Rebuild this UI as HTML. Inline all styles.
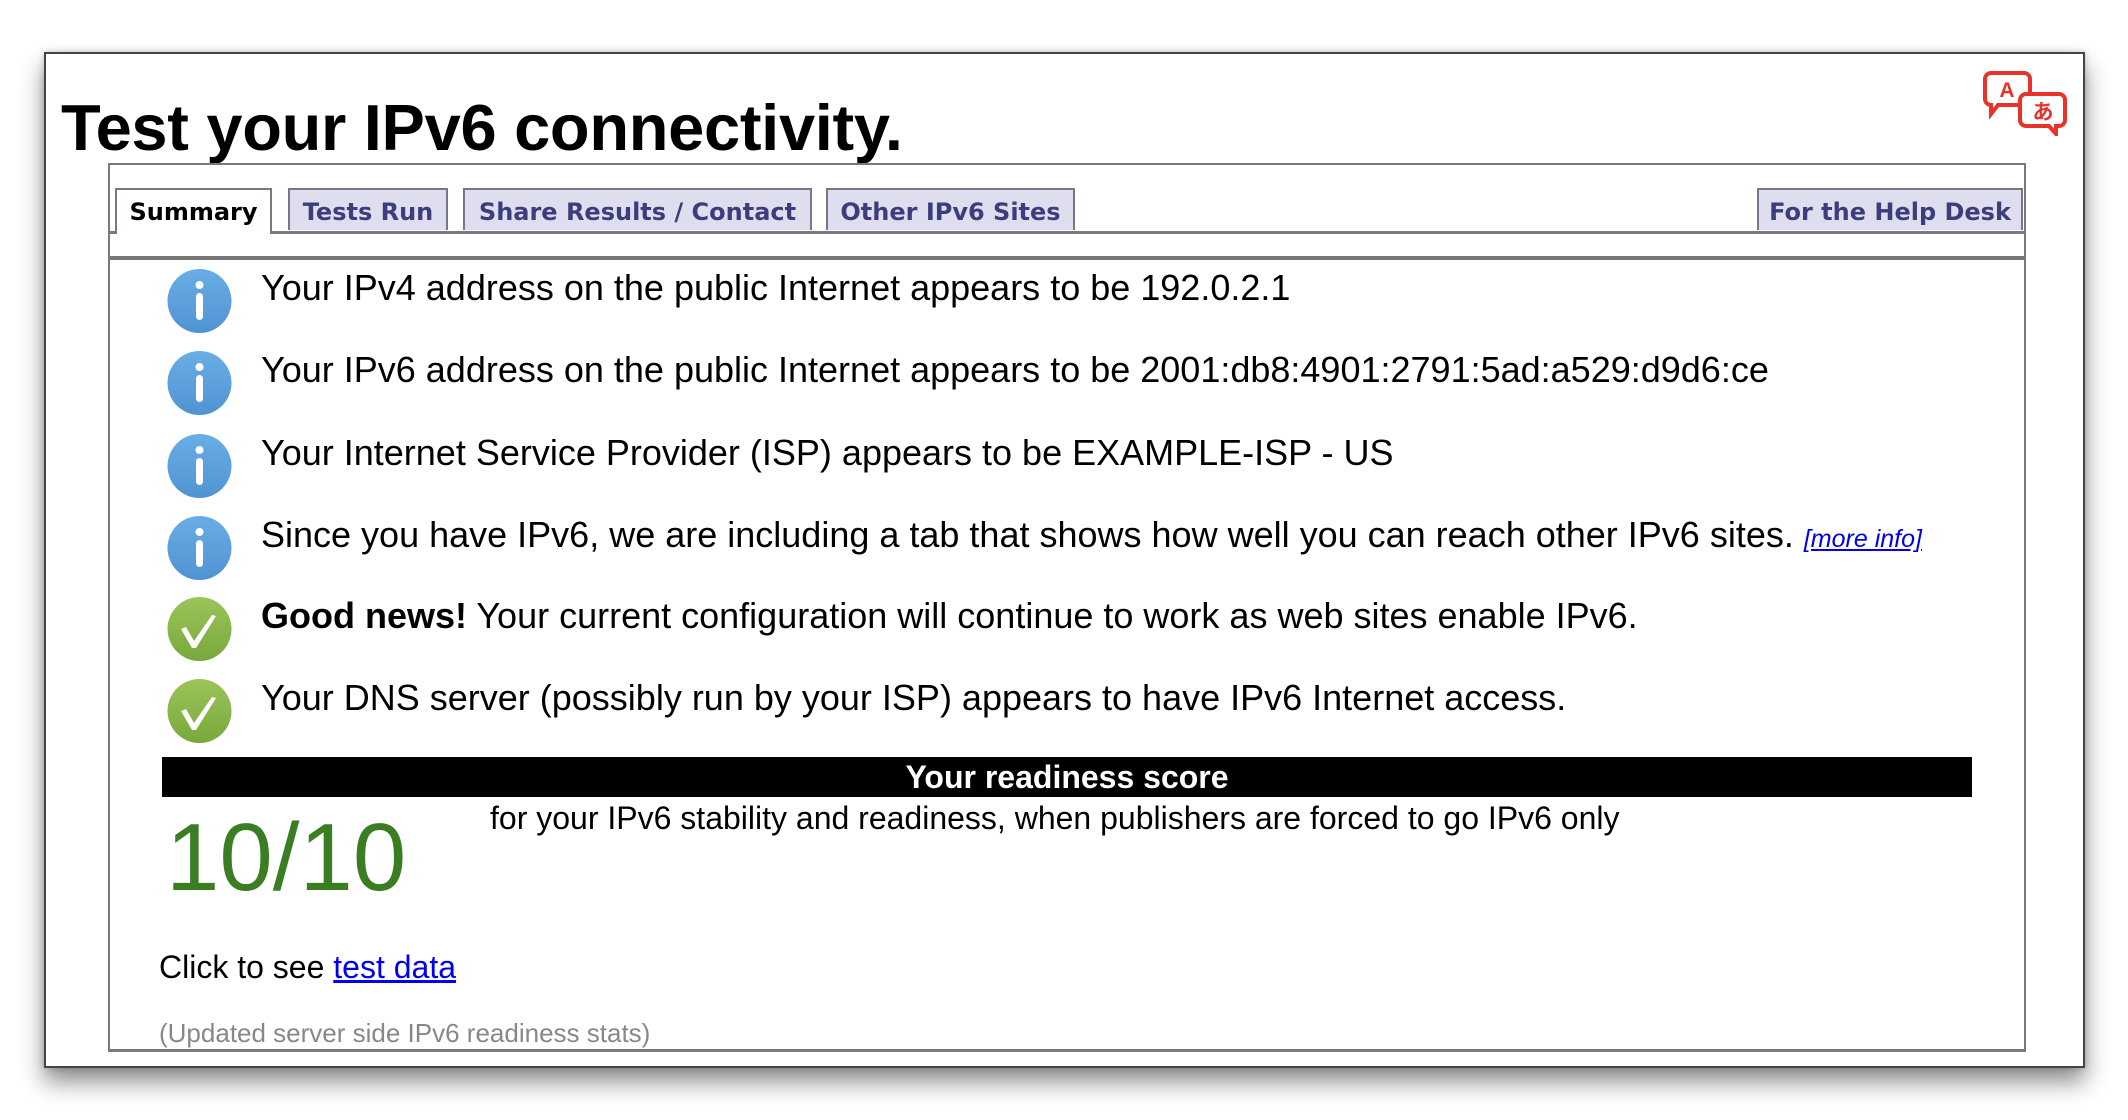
<!DOCTYPE html>
<html><head><meta charset="utf-8">
<style>
body{margin:0;width:2128px;height:1120px;background:#fff;position:relative;overflow:hidden;font-family:"Liberation Sans",Arial,sans-serif;}
.win{position:absolute;left:44px;top:52px;width:2037px;height:1012px;border:2px solid #444;background:#fff;box-shadow:0 14px 22px rgba(0,0,0,.45),0 0 6px rgba(0,0,0,.2);}
.abs{position:absolute;white-space:nowrap;}
h1{position:absolute;left:61px;top:88px;margin:0;font-size:65px;font-weight:bold;letter-spacing:-0.3px;line-height:80px;}
.box{position:absolute;left:108px;top:163px;width:1914px;height:884px;border:2px solid #7a7a7a;border-bottom:3px solid #7a7a7a;}
.tabline{position:absolute;left:110px;top:231px;width:1914px;height:3px;background:#7a7a80;}
.line2{position:absolute;left:110px;top:256px;width:1914px;height:4px;background:#777;}
.tab{position:absolute;top:188px;height:42px;background:#dfdeee;border:2px solid #777788;border-bottom:none;font-family:"DejaVu Sans",Verdana,sans-serif;font-weight:bold;font-size:24px;color:#3b3d7c;line-height:44px;text-align:center;box-sizing:border-box;}
.tab.sel{background:#fff;color:#000;height:46px;}
.row{position:absolute;left:261px;font-size:36px;line-height:40px;color:#000;white-space:nowrap;}
.ic{position:absolute;left:166px;width:67px;height:67px;}
</style></head><body>
<div class="win"></div>
<h1>Test your IPv6 connectivity.</h1>
<svg class="abs" style="left:1982px;top:70px" width="86" height="66" viewBox="0 0 86 66">
<path d="M8 3 h34 a6 6 0 0 1 6 6 v20 a6 6 0 0 1 -6 6 h-26 l-7 9 v-9 a6 6 0 0 1 -6 -6 v-20 a6 6 0 0 1 6 -6z" fill="#fff" stroke="#e8332a" stroke-width="4"/>
<text x="25" y="27" font-family="Liberation Sans,sans-serif" font-weight="bold" font-size="21" fill="#e8332a" text-anchor="middle">A</text>
<path d="M44 24 h33 a6 6 0 0 1 6 6 v20 a6 6 0 0 1 -6 6 h-3 v8 l-7 -8 h-23 a6 6 0 0 1 -6 -6 v-20 a6 6 0 0 1 6 -6z" fill="#fff" stroke="#e8332a" stroke-width="4"/>
<text x="61" y="49" font-family="Noto Sans CJK JP,sans-serif" font-weight="bold" font-size="21" fill="#e8332a" text-anchor="middle">あ</text>
</svg>
<div class="box"></div>
<div class="tabline"></div>
<div class="line2"></div>
<div class="tab sel" style="left:115px;width:157px;">Summary</div>
<div class="tab" style="left:288px;width:160px;">Tests Run</div>
<div class="tab" style="left:463px;width:349px;">Share Results / Contact</div>
<div class="tab" style="left:826px;width:249px;">Other IPv6 Sites</div>
<div class="tab" style="left:1757px;width:266px;">For the Help Desk</div>

<svg width="0" height="0" style="position:absolute"><defs>
<linearGradient id="bl" x1="0" y1="0" x2="0" y2="1"><stop offset="0" stop-color="#6aaee6"/><stop offset="1" stop-color="#4f93d2"/></linearGradient>
<linearGradient id="gr" x1="0" y1="0" x2="0" y2="1"><stop offset="0" stop-color="#9cc45a"/><stop offset="1" stop-color="#78a83c"/></linearGradient>
</defs></svg>

<svg class="ic" style="top:268px" viewBox="0 0 67 67"><circle cx="33.5" cy="33" r="32" fill="url(#bl)"/><circle cx="33.5" cy="17" r="4" fill="#fff"/><rect x="30" y="25" width="7" height="27" rx="3.5" fill="#fff"/></svg>
<svg class="ic" style="top:350px" viewBox="0 0 67 67"><circle cx="33.5" cy="33" r="32" fill="url(#bl)"/><circle cx="33.5" cy="17" r="4" fill="#fff"/><rect x="30" y="25" width="7" height="27" rx="3.5" fill="#fff"/></svg>
<svg class="ic" style="top:433px" viewBox="0 0 67 67"><circle cx="33.5" cy="33" r="32" fill="url(#bl)"/><circle cx="33.5" cy="17" r="4" fill="#fff"/><rect x="30" y="25" width="7" height="27" rx="3.5" fill="#fff"/></svg>
<svg class="ic" style="top:515px" viewBox="0 0 67 67"><circle cx="33.5" cy="33" r="32" fill="url(#bl)"/><circle cx="33.5" cy="17" r="4" fill="#fff"/><rect x="30" y="25" width="7" height="27" rx="3.5" fill="#fff"/></svg>
<svg class="ic" style="top:596px" viewBox="0 0 67 67"><circle cx="33.5" cy="33" r="32" fill="url(#gr)"/><path d="M15 33 L26 52 L30 52 L50 20 L46 19 L28 45 L20 31Z" fill="#fff"/></svg>
<svg class="ic" style="top:678px" viewBox="0 0 67 67"><circle cx="33.5" cy="33" r="32" fill="url(#gr)"/><path d="M15 33 L26 52 L30 52 L50 20 L46 19 L28 45 L20 31Z" fill="#fff"/></svg>

<div class="row" style="top:268px">Your IPv4 address on the public Internet appears to be 192.0.2.1</div>
<div class="row" style="top:350px">Your IPv6 address on the public Internet appears to be 2001:db8:4901:2791:5ad:a529:d9d6:ce</div>
<div class="row" style="top:433px">Your Internet Service Provider (ISP) appears to be EXAMPLE-ISP - US</div>
<div class="row" style="top:515px">Since you have IPv6, we are including a tab that shows how well you can reach other IPv6 sites. <a style="color:#00e;font-style:italic;font-size:25px;text-decoration:underline">[more info]</a></div>
<div class="row" style="top:596px"><b>Good news!</b> Your current configuration will continue to work as web sites enable IPv6.</div>
<div class="row" style="top:678px">Your DNS server (possibly run by your ISP) appears to have IPv6 Internet access.</div>

<div class="abs" style="left:162px;top:757px;width:1810px;height:40px;background:#000;color:#fff;font-weight:bold;font-size:32px;line-height:40px;text-align:center;">Your readiness score</div>
<div class="abs" style="left:166px;top:808px;font-size:96px;line-height:100px;color:#3a7d22;">10/10</div>
<div class="abs" style="left:490px;top:800px;font-size:32px;line-height:36px;">for your IPv6 stability and readiness, when publishers are forced to go IPv6 only</div>
<div class="abs" style="left:159px;top:949px;font-size:32px;line-height:36px;">Click to see <a style="color:#00e;text-decoration:underline">test data</a></div>
<div class="abs" style="left:159px;top:1018px;font-size:26px;line-height:30px;color:#888;">(Updated server side IPv6 readiness stats)</div>
</body></html>
